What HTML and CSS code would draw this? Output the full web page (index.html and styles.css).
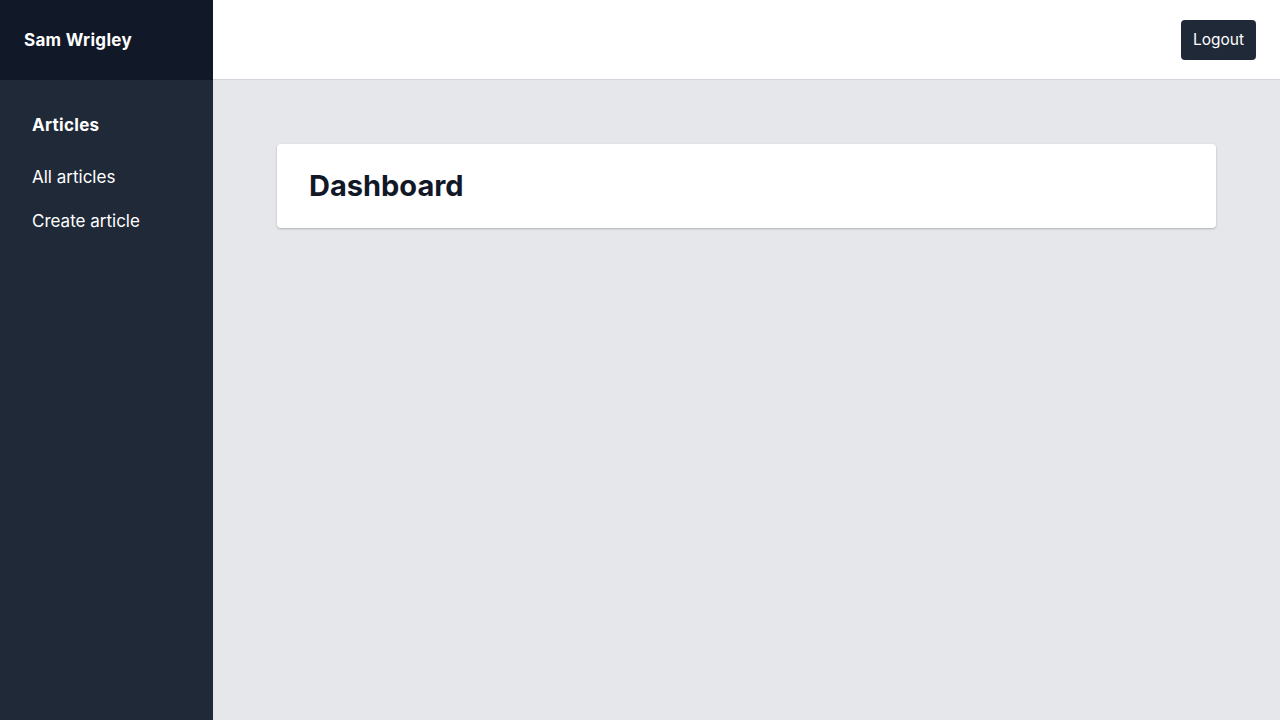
FILE: index.html
```html
<!DOCTYPE html>
<html lang="en">
<head>
<meta charset="utf-8">
<title>Dashboard</title>
<link rel="stylesheet" href="styles.css">
</head>
<body>
<div class="layout">
  <aside class="sidebar">
    <div class="brand">Sam Wrigley</div>
    <nav class="nav">
      <div class="nav-heading">Articles</div>
      <a class="nav-link" href="#">All articles</a>
      <a class="nav-link" href="#">Create article</a>
    </nav>
  </aside>
  <div class="content">
    <header class="topbar">
      <button class="logout" type="button">Logout</button>
    </header>
    <main class="main">
      <section class="card">
        <h1 class="title">Dashboard</h1>
      </section>
    </main>
  </div>
</div>
</body>
</html>
```
FILE: styles.css
```css
* { box-sizing: border-box; }
html, body { margin: 0; height: 100%; }
body {
  font-family: Inter, "Noto Sans", "Liberation Sans", sans-serif;
  color: #111827;
  background: #e5e7eb;
}
.layout {
  display: flex;
  height: 720px;
}
.sidebar {
  width: 213px;
  flex-shrink: 0;
  background: #1f2937;
  color: #ffffff;
  display: flex;
  flex-direction: column;
}
.brand {
  height: 80px;
  background: #111827;
  display: flex;
  align-items: center;
  padding-left: 24px;
  font-weight: 700;
  font-size: 17px;
  letter-spacing: 0.3px;
}
.nav {
  display: flex;
  flex-direction: column;
  padding: 33px 32px;
}
.nav-heading {
  font-weight: 700;
  font-size: 17px;
  letter-spacing: 0.3px;
  line-height: 24px;
  margin-bottom: 28px;
}
.nav-link {
  color: #ffffff;
  text-decoration: none;
  font-size: 17px;
  line-height: 24px;
  margin-bottom: 20px;
}
.content {
  flex: 1;
  display: flex;
  flex-direction: column;
}
.topbar {
  height: 80px;
  background: #ffffff;
  border-bottom: 1px solid #d1d5db;
  display: flex;
  align-items: center;
  justify-content: flex-end;
  padding-right: 24px;
}
.logout {
  background: #1f2937;
  color: #ffffff;
  border: none;
  border-radius: 4px;
  height: 40px;
  padding: 0 12px;
  font-family: inherit;
  font-size: 15.5px;
}
.main {
  flex: 1;
  padding: 64px 64px;
}
.card {
  background: #ffffff;
  border-radius: 4px;
  box-shadow: 0 1px 3px rgba(0,0,0,0.1), 0 1px 2px rgba(0,0,0,0.14);
  padding: 24px 32px;
}
.title {
  margin: 0;
  font-size: 29px;
  line-height: 36px;
  font-weight: 700;
  color: #111827;
}
```
